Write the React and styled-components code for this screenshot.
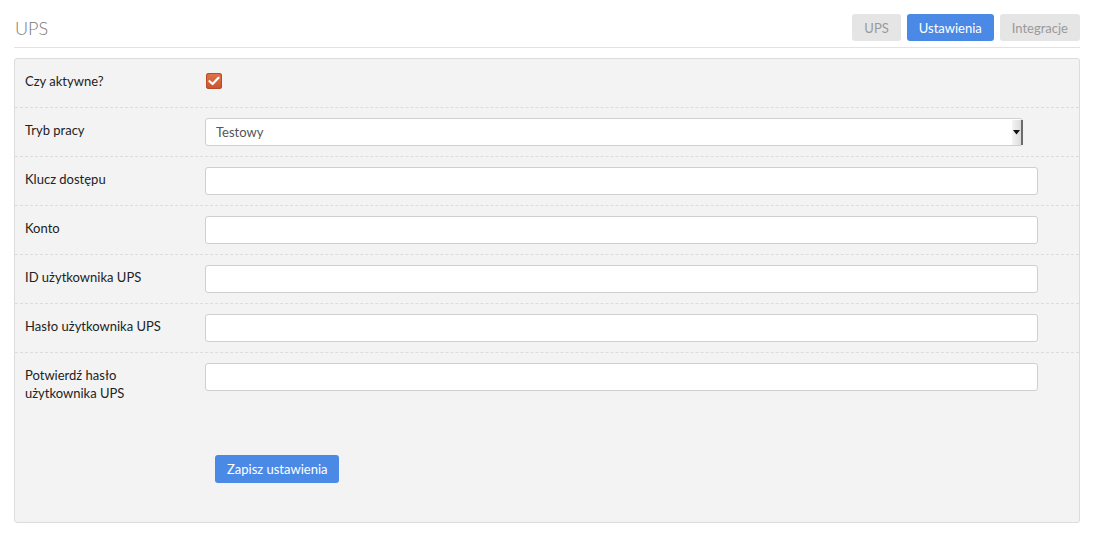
import React, { useState } from "react";
import styled, { createGlobalStyle } from "styled-components";

const GlobalStyle = createGlobalStyle`
  body {
    margin: 0;
    background: #fff;
    font-family: Lato, "Open Sans", sans-serif;
    font-size: 13px;
    color: #222;
  }
`;

const fields = [
  { label: "Klucz dostępu" },
  { label: "Konto" },
  { label: "ID użytkownika UPS" },
  { label: "Hasło użytkownika UPS" },
  { label: "Potwierdź hasło użytkownika UPS", last: true },
];

const App = () => {
  const [active, setActive] = useState(true);
  const [mode, setMode] = useState("test");

  return (
    <Page>
      <GlobalStyle />
      <Header>
        <Title>UPS</Title>
        <Tabs>
          <Tab>UPS</Tab>
          <Tab active>Ustawienia</Tab>
          <Tab>Integracje</Tab>
        </Tabs>
      </Header>

      <Panel>
        <Row>
          <Label>Czy aktywne?</Label>
          <CheckBox checked={active} onClick={() => setActive(!active)}>
            {active && (
              <svg width="12" height="10" viewBox="0 0 12 10">
                <path d="M1.5 5.2 L4.6 8 L10.5 1.8" fill="none" stroke="#fff" strokeWidth="2.2" strokeLinecap="round" strokeLinejoin="round" />
              </svg>
            )}
          </CheckBox>
        </Row>

        <Row>
          <Label>Tryb pracy</Label>
          <SelectWrap>
            <Select value={mode} onChange={(e) => setMode(e.target.value)}>
              <option value="test">Testowy</option>
              <option value="prod">Produkcyjny</option>
            </Select>
            <SelectArrow>
              <svg width="7" height="5" viewBox="0 0 7 5">
                <path d="M0 0 H7 L3.5 4.5 Z" fill="#111" />
              </svg>
            </SelectArrow>
          </SelectWrap>
        </Row>

        {fields.map((f) => (
          <Row key={f.label} last={f.last}>
            <Label>{f.label}</Label>
            <Input type="text" />
          </Row>
        ))}

        <Actions>
          <SaveButton>Zapisz ustawienia</SaveButton>
        </Actions>
      </Panel>
    </Page>
  );
};

const Page = styled.div`
  padding: 14px 16px 0 14px;
`;
const Header = styled.div`
  display: flex;
  align-items: center;
  justify-content: space-between;
  height: 27px;
  padding-bottom: 6px;
  border-bottom: 1px solid #e2e2e2;
`;
const Title = styled.div`
  font-size: 18px;
  font-weight: 300;
  color: #7a7a7a;
  padding-left: 1px;
  padding-top: 1px;
`;
const Tabs = styled.div`
  display: flex;
  gap: 6px;
`;
const Tab = styled.button`
  height: 27px;
  padding: 0 12px;
  border: none;
  border-radius: 3px;
  font-family: Lato, sans-serif;
  font-size: 13px;
  background: ${(p) => (p.active ? "#4a89e6" : "#e5e5e5")};
  color: ${(p) => (p.active ? "#fff" : "#9a9a9a")};
  cursor: pointer;
`;
const Panel = styled.div`
  margin-top: 10px;
  background: #f3f3f3;
  border: 1px solid #dcdcdc;
  border-radius: 3px;
  height: 465px;
  box-sizing: border-box;
`;
const Row = styled.div`
  display: flex;
  align-items: flex-start;
  padding: 10px 41px 10px 10px;
  min-height: 28px;
  border-bottom: ${(p) => (p.last ? "none" : "1px dashed #dcdcdc")};
`;
const Label = styled.div`
  flex: 0 0 150px;
  margin-right: 30px;
  padding-top: 3px;
  line-height: 18px;
  font-size: 13px;
  color: #222;
`;
const CheckBox = styled.div`
  margin-top: 4px;
  margin-left: 1px;
  width: 16px;
  height: 16px;
  border-radius: 3px;
  background: linear-gradient(#e2754b, #c9552c);
  box-shadow: inset 0 0 0 1px #b84c28;
  display: flex;
  align-items: center;
  justify-content: center;
  cursor: pointer;
`;
const SelectWrap = styled.div`
  position: relative;
  width: 818px;
  height: 28px;
`;
const Select = styled.select`
  appearance: none;
  width: 100%;
  height: 28px;
  box-sizing: border-box;
  border: 1px solid #cfcfcf;
  border-radius: 3px;
  background: #fff;
  padding: 0 10px;
  font-family: Lato, sans-serif;
  font-size: 13px;
  color: #555;
  outline: none;
`;
const SelectArrow = styled.span`
  position: absolute;
  right: 0;
  top: 2px;
  bottom: 1px;
  width: 9px;
  background: linear-gradient(90deg, #f4f4f4, #dcdcdc);
  border-right: 2px solid #6b6b6b;
  display: flex;
  align-items: center;
  justify-content: center;
  pointer-events: none;
`;
const Input = styled.input`
  width: 833px;
  height: 28px;
  box-sizing: border-box;
  border: 1px solid #cfcfcf;
  border-radius: 3px;
  background: #fff;
  padding: 0 10px;
  font-family: Lato, sans-serif;
  font-size: 13px;
  outline: none;
`;
const Actions = styled.div`
  padding: 43px 0 0 200px;
`;
const SaveButton = styled.button`
  height: 28px;
  padding: 0 12px;
  border: none;
  border-radius: 3px;
  background: #4a89e6;
  color: #fff;
  font-family: Lato, sans-serif;
  font-size: 13px;
  cursor: pointer;
`;

export default App;
